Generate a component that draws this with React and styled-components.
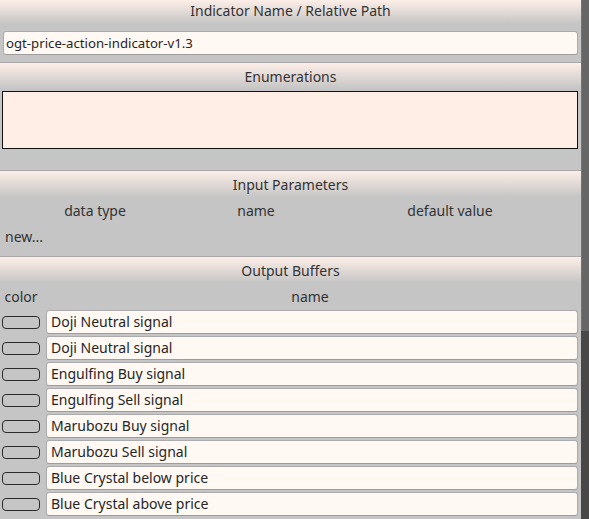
import React from "react";
import styled, { createGlobalStyle } from "styled-components";

const GlobalStyle = createGlobalStyle`
  html, body { margin: 0; padding: 0; background: #c5c5c5; }
  body { font-family: "Noto Sans", "Open Sans", sans-serif; font-size: 14px; color: #333; }
`;

const Window = styled.div`
  display: flex;
  width: 589px;
  height: 519px;
  overflow: hidden;
  background: #c5c5c5;
`;

const Main = styled.div`
  flex: 1;
  display: flex;
  flex-direction: column;
  min-width: 0;
`;

const Scrollbar = styled.div`
  width: 8px;
  display: flex;
  flex-direction: column;
  background: #484848;
`;

const Thumb = styled.div`
  height: 331px;
  background: #666;
  border-left: 1px solid #747474;
  box-sizing: border-box;
`;

const Section = styled.section`
  display: flex;
  flex-direction: column;
  border-top: ${(p) => (p.$first ? "none" : "1px solid #a9a9a9")};
  padding-bottom: ${(p) => p.$pad || 0}px;
`;

const Header = styled.div`
  box-sizing: border-box;
  height: ${(p) => (p.$first ? 24 : 26)}px;
  padding-top: ${(p) => (p.$first ? 0 : 2)}px;
  line-height: ${(p) => (p.$first ? 22 : 24)}px;
  text-align: center;
  background: linear-gradient(#fdeee8, #c5c5c5);
  color: #333;
`;

const TextField = styled.div`
  box-sizing: border-box;
  height: 24px;
  line-height: 22px;
  padding: 0 4px;
  background: #fff8f3;
  border: 1px solid #ababab;
  border-bottom-color: #9d9d9d;
  border-radius: 3px;
  color: #262626;
  white-space: nowrap;
  overflow: hidden;
`;

const NameField = styled(TextField)`
  margin: 7px 3px 0 3px;
  padding-left: 2px;
  font-size: 13.2px;
`;

const EnumBox = styled.div`
  box-sizing: border-box;
  height: 58px;
  margin: 2px 3px 0 2px;
  background: #ffeee6;
  border: 1px solid #111;
`;

const Columns = styled.div`
  display: grid;
  grid-template-columns: ${(p) => p.$cols};
  height: ${(p) => p.$h}px;
  align-items: center;
  padding-right: 3px;
`;

const Label = styled.div`
  text-align: center;
`;

const NewLink = styled.div`
  height: 28px;
  line-height: 28px;
  padding-left: 5px;
`;

const BufferList = styled.div`
  display: flex;
  flex-direction: column;
  gap: 2px;
  padding-right: 3px;
`;

const BufferRow = styled.div`
  display: grid;
  grid-template-columns: 46px 1fr;
  align-items: center;
`;

const Swatch = styled.div`
  box-sizing: border-box;
  width: 38px;
  height: 13px;
  margin-left: 2px;
  border: 1px solid #2a2a2a;
  border-radius: 4px;
  background: ${(p) => p.$color};
`;

const buffers = [
  "Doji Neutral signal",
  "Doji Neutral signal",
  "Engulfing Buy signal",
  "Engulfing Sell signal",
  "Marubozu Buy signal",
  "Marubozu Sell signal",
  "Blue Crystal below price",
  "Blue Crystal above price",
];

export default function App() {
  return (
    <>
      <GlobalStyle />
      <Window>
        <Main>
          <Section $first $pad={7}>
            <Header $first>Indicator Name / Relative Path</Header>
            <NameField>ogt-price-action-indicator-v1.3</NameField>
          </Section>
          <Section $pad={21}>
            <Header>Enumerations</Header>
            <EnumBox />
          </Section>
          <Section $pad={5}>
            <Header>Input Parameters</Header>
            <Columns $cols="190px 132px 1fr" $h={26}>
              <Label>data type</Label>
              <Label>name</Label>
              <Label>default value</Label>
            </Columns>
            <NewLink>new...</NewLink>
          </Section>
          <Section>
            <Header>Output Buffers</Header>
            <Columns $cols="42px 1fr" $h={27}>
              <Label>color</Label>
              <Label>name</Label>
            </Columns>
            <BufferList>
              {buffers.map((name, i) => (
                <BufferRow key={i}>
                  <Swatch $color="transparent" />
                  <TextField>{name}</TextField>
                </BufferRow>
              ))}
            </BufferList>
          </Section>
        </Main>
        <Scrollbar>
          <Thumb />
        </Scrollbar>
      </Window>
    </>
  );
}
